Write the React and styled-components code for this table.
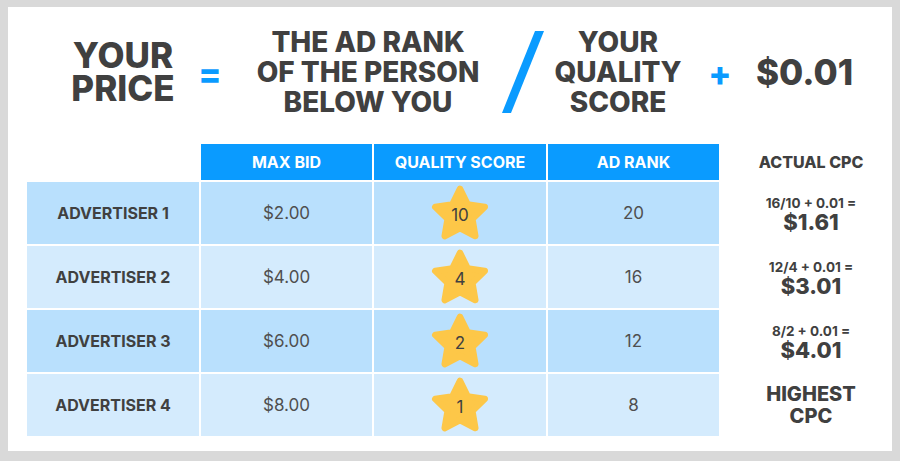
import React from "react";
import styled, { createGlobalStyle } from "styled-components";

const GlobalStyle = createGlobalStyle`
    html, body {
        margin: 0;
        padding: 0;
        background: #d9d9d9;
    }
    body {
        font-family: Inter, "Open Sans", Arial, sans-serif;
        color: #404040;
    }
`;

const Page = styled.div`
    width: 900px;
    height: 461px;
    padding: 7px 8px 10px 8px;
    box-sizing: border-box;
`;

const Card = styled.div`
    width: 884px;
    height: 444px;
    background: #ffffff;
    box-sizing: border-box;
    padding: 19px 0 0 0;
`;

/* formula across the top */
const Formula = styled.div`
    display: grid;
    grid-template-columns: 126px 48px 268px 40px 152px 52px 117px;
    align-items: center;
    height: 92px;
    margin-left: 52px;
`;

const Term = styled.div`
    text-align: center;
    white-space: nowrap;
    font-weight: 800;
    font-size: ${(p) => p.size}px;
    line-height: ${(p) => p.lh}px;
    color: #404040;
`;

const Operator = styled.div`
    text-align: center;
    font-weight: 800;
    font-size: 34px;
    line-height: 34px;
    color: #0a9bff;
    margin-top: 4px;
`;

const Slash = styled.svg`
    display: block;
    margin: 0 auto;
`;

/* table */
const Table = styled.div`
    display: grid;
    grid-template-columns: 172px 171px 172px 171px 162px;
    grid-template-rows: 36px repeat(4, 62px);
    column-gap: 2px;
    row-gap: 2px;
    margin: 26px 0 0 19px;
`;

const Blank = styled.div``;

const HeadCell = styled.div`
    background: #0a9bff;
    color: #ffffff;
    font-weight: 700;
    font-size: 16px;
    display: flex;
    align-items: center;
    justify-content: center;
`;

const Cell = styled.div`
    background: ${(p) => (p.odd ? "#b9e0fd" : "#d4ebfd")};
    display: flex;
    align-items: center;
    justify-content: center;
    font-size: ${(p) => (p.bold ? 16 : 17)}px;
    font-weight: ${(p) => (p.bold ? 700 : 400)};
    color: ${(p) => (p.bold ? "#404040" : "#4f4f4f")};
`;

const CpcCell = styled.div`
    display: flex;
    flex-direction: column;
    align-items: center;
    justify-content: center;
    padding-left: 18px;
    text-align: center;
    color: #404040;
`;

const CpcHead = styled.div`
    font-weight: 800;
    font-size: 16px;
`;

const CpcMath = styled.div`
    font-weight: 700;
    font-size: 13.5px;
    line-height: 15px;
    margin-top: 2px;
`;

const CpcValue = styled.div`
    font-weight: 800;
    font-size: 22px;
    line-height: 22px;
`;

const Highest = styled.div`
    font-weight: 800;
    font-size: 20px;
    line-height: 22px;
`;

const StarWrap = styled.div`
    display: grid;
    place-items: center;
    width: 58px;
    height: 56px;
    & > * {
        grid-area: 1 / 1;
    }
`;

const StarNum = styled.span`
    font-size: 17px;
    color: #404040;
    margin-top: 4px;
`;

const Star = ({ n }) => (
    <StarWrap>
        <svg width="58" height="56" viewBox="-1 -1 58 56">
            <polygon
                points="28,3 35.64,18.48 52.73,20.97 40.36,33.02 43.28,50.03 28,42 12.72,50.03 15.64,33.02 3.27,20.97 20.36,18.48"
                fill="#fdc748"
                stroke="#fdc748"
                strokeWidth="6.5"
                strokeLinejoin="round"
            />
        </svg>
        <StarNum>{n}</StarNum>
    </StarWrap>
);

const rows = [
    { name: "ADVERTISER 1", bid: "$2.00", qs: 10, rank: 20, math: "16/10 + 0.01 =", cpc: "$1.61" },
    { name: "ADVERTISER 2", bid: "$4.00", qs: 4, rank: 16, math: "12/4 + 0.01 =", cpc: "$3.01" },
    { name: "ADVERTISER 3", bid: "$6.00", qs: 2, rank: 12, math: "8/2 + 0.01 =", cpc: "$4.01" },
    { name: "ADVERTISER 4", bid: "$8.00", qs: 1, rank: 8 },
];

export default function App() {
    return (
        <>
            <GlobalStyle />
            <Page>
                <Card>
                    <Formula>
                        <Term size={35} lh={33}>
                            YOUR
                            <br />
                            PRICE
                        </Term>
                        <Operator>=</Operator>
                        <Term size={28} lh={30}>
                            THE AD RANK
                            <br />
                            OF THE PERSON
                            <br />
                            BELOW YOU
                        </Term>
                        <Slash width="42" height="82" viewBox="0 0 42 82">
                            <polygon points="33,0 42,0 9,82 0,82" fill="#0a9bff" />
                        </Slash>
                        <Term size={28} lh={30}>
                            YOUR
                            <br />
                            QUALITY
                            <br />
                            SCORE
                        </Term>
                        <Operator>+</Operator>
                        <Term size={35} lh={36}>
                            $0.01
                        </Term>
                    </Formula>

                    <Table>
                        <Blank />
                        <HeadCell>MAX BID</HeadCell>
                        <HeadCell>QUALITY SCORE</HeadCell>
                        <HeadCell>AD RANK</HeadCell>
                        <CpcCell>
                            <CpcHead>ACTUAL CPC</CpcHead>
                        </CpcCell>

                        {rows.map((r, i) => (
                            <React.Fragment key={r.name}>
                                <Cell odd={i % 2 === 0} bold>
                                    {r.name}
                                </Cell>
                                <Cell odd={i % 2 === 0}>{r.bid}</Cell>
                                <Cell odd={i % 2 === 0}>
                                    <Star n={r.qs} />
                                </Cell>
                                <Cell odd={i % 2 === 0}>{r.rank}</Cell>
                                <CpcCell>
                                    {r.cpc ? (
                                        <>
                                            <CpcMath>{r.math}</CpcMath>
                                            <CpcValue>{r.cpc}</CpcValue>
                                        </>
                                    ) : (
                                        <Highest>
                                            HIGHEST
                                            <br />
                                            CPC
                                        </Highest>
                                    )}
                                </CpcCell>
                            </React.Fragment>
                        ))}
                    </Table>
                </Card>
            </Page>
        </>
    );
}
